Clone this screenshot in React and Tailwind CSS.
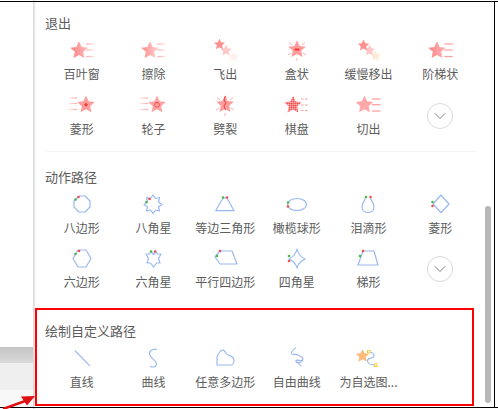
import { ChevronDown } from 'lucide-react';

const starPts = (cx, cy, r) => {
  const pts = [];
  for (let i = 0; i < 10; i++) {
    const rad = i % 2 === 0 ? r : r * 0.48;
    const a = -Math.PI / 2 + (i * Math.PI) / 5;
    pts.push(`${(cx + rad * Math.cos(a)).toFixed(2)},${(cy + rad * Math.sin(a)).toFixed(2)}`);
  }
  return pts.join(' ');
};

function Defs() {
  return (
    <svg width="0" height="0" className="absolute">
      <defs>
        <linearGradient id="fadeR">
          <stop offset="0" stopColor="#ff8282" />
          <stop offset="1" stopColor="#ffb8b8" />
        </linearGradient>
        <linearGradient id="fadeWipe">
          <stop offset="0" stopColor="#ff8888" />
          <stop offset="1" stopColor="#ffd4d4" />
        </linearGradient>
        <linearGradient id="lineR">
          <stop offset="0" stopColor="#ffa6a6" />
          <stop offset="1" stopColor="#ffecec" />
        </linearGradient>
        <linearGradient id="lineL">
          <stop offset="0" stopColor="#ffecec" />
          <stop offset="1" stopColor="#ffa6a6" />
        </linearGradient>
        <pattern id="check" width="2" height="2" patternUnits="userSpaceOnUse">
          <rect width="2" height="2" fill="#ff8080" />
          <rect width="1" height="1" fill="#f04a4a" />
          <rect x="1" y="1" width="1" height="1" fill="#ffb0b0" />
        </pattern>
      </defs>
    </svg>
  );
}

function Svg({ children }) {
  return (
    <svg width="28" height="24" viewBox="0 0 28 24" fill="none">
      {children}
    </svg>
  );
}

const Lines = ({ x, stroke, ys = [6, 12, 18.5] }) =>
  ys.map((y) => <rect key={y} x={x} y={y - 0.6} width="8.5" height="1.2" fill={stroke} />);

const Burst = () => (
  <g stroke="#ffa8a8" strokeWidth="0.9">
    <path d="M6 4.5l3 2.5M22 4.5l-3 2.5M5 17l3-2M23 17l-3-2M14 20v3" />
  </g>
);

const icons = {
  blinds: (
    <Svg>
      <polygon points={starPts(11, 12.5, 9.2)} fill="url(#fadeR)" />
      <Lines x={18.3} stroke="url(#lineR)" />
    </Svg>
  ),
  wipe: (
    <Svg>
      <polygon points={starPts(11, 12.5, 9.2)} fill="url(#fadeWipe)" />
      <Lines x={18.3} stroke="url(#lineR)" />
    </Svg>
  ),
  fly: (
    <Svg>
      <polygon points={starPts(22.5, 19, 5.5)} fill="#fff0f0" />
      <polygon points={starPts(15, 12.5, 6)} fill="#ffc8c8" />
      <polygon points={starPts(8.5, 6.5, 5.8)} fill="#ff9090" />
    </Svg>
  ),
  box: (
    <Svg>
      <Burst />
      <polygon points={starPts(14, 11.5, 9.2)} fill="#ff9c9c" />
      <rect x="11.5" y="10.5" width="5" height="2" fill="#f03a3a" />
    </Svg>
  ),
  crawl: (
    <Svg>
      <polygon points={starPts(21.5, 18, 5.5)} fill="#ffe8d6" />
      <polygon points={starPts(15.5, 12.5, 5.8)} fill="#ffc4c4" />
      <polygon points={starPts(9.5, 7.5, 6)} fill="#ff9090" />
    </Svg>
  ),
  stairs: (
    <Svg>
      <polygon points={starPts(11, 12.5, 9.2)} fill="url(#fadeR)" />
      <Lines x={18.3} stroke="#ffa0a0" />
    </Svg>
  ),
  diamond: (
    <Svg>
      <Lines x={0.5} stroke="url(#lineL)" ys={[5, 10.5, 16.5]} />
      <polygon points={starPts(18, 11.8, 9.2)} fill="#ff9c9c" />
      <polygon points="18,9.8 20,11.8 18,13.8 16,11.8" fill="#f03a3a" />
    </Svg>
  ),
  wheel: (
    <Svg>
      <Lines x={0.5} stroke="url(#lineL)" ys={[5, 10.5, 16.5]} />
      <polygon points={starPts(18, 11.8, 9.2)} fill="#ffa4a4" />
      <circle cx="18" cy="11.8" r="2.4" stroke="#f05050" strokeWidth="1" />
    </Svg>
  ),
  split: (
    <Svg>
      <Burst />
      <polygon points={starPts(14, 11.5, 9.2)} fill="#ff9c9c" />
      <path d="M14.5 3l-1.5 4 2 3-2 3 1.5 4" stroke="#f03a3a" strokeWidth="1" />
    </Svg>
  ),
  checker: (
    <Svg>
      <polygon points={starPts(10, 12, 9.2)} fill="url(#check)" />
      <path d="M18 6h7M18 12h7M18 17.5h7" stroke="#ff9a9a" strokeWidth="1.2" strokeDasharray="2.5 1.5" />
    </Svg>
  ),
  cut: (
    <Svg>
      <polygon points={starPts(10.5, 11.8, 9.2)} fill="#ffa8a8" />
      <Lines x={18} stroke="#ff9a9a" ys={[6, 11.7, 18]} />
    </Svg>
  ),
};

const Dots = ({ g, r }) => (
  <>
    <circle cx={g[0]} cy={g[1]} r="1.3" fill="#4cb84c" />
    <circle cx={r[0]} cy={r[1]} r="1.3" fill="#f05050" />
  </>
);

const blue = { stroke: '#9ab9f0', strokeWidth: 1.2, strokeLinejoin: 'round', strokeLinecap: 'round' };

const paths = {
  octagon: (
    <Svg>
      <polygon points="11,4 17,4 22,9 22,15 17,20 11,20 6,15 6,9" {...blue} />
      <Dots g={[7.5, 7.5]} r={[10.5, 5]} />
    </Svg>
  ),
  star8: (
    <Svg>
      <polygon points="14,3 16.5,6.5 20.5,5.5 19.5,10 23,12.5 19.5,15 20.5,19 16.5,18 14,21.5 11.5,18 7.5,19 8.5,15 5,12.5 8.5,10 7.5,5.5 11.5,6.5" {...blue} />
      <Dots g={[7.5, 10]} r={[10.5, 7]} />
    </Svg>
  ),
  triangle: (
    <Svg>
      <polygon points="12,6 16,6 23,18.7 4.7,18.7" {...blue} />
      <Dots g={[12, 5.5]} r={[16, 5.5]} />
    </Svg>
  ),
  ellipse: (
    <Svg>
      <ellipse cx="14" cy="12.5" rx="9.5" ry="6" {...blue} />
      <Dots g={[5, 10.5]} r={[5, 14.5]} />
    </Svg>
  ),
  tear: (
    <Svg>
      <path d="M11.5 5.5C11 9 8 11 8 15c0 3.5 2.8 5.5 6 5.5s6-2 6-5.5c0-4-3-6-3.5-9.5" {...blue} />
      <Dots g={[12, 5]} r={[16.5, 5]} />
    </Svg>
  ),
  rhombus: (
    <Svg>
      <polygon points="15,3 23,12 15,20.5 7,12" {...blue} />
      <Dots g={[6.5, 10]} r={[6.5, 14]} />
    </Svg>
  ),
  hexagon: (
    <Svg>
      <polygon points="10,4 18,4 23,12.5 18,21 10,21 5,12.5" {...blue} />
      <Dots g={[7.5, 8]} r={[11, 5]} />
    </Svg>
  ),
  star6: (
    <Svg>
      <polygon points="12,5.5 14.5,8.5 17,5.5 18.5,8 22,8 19.5,12.5 21,17 17.5,17 14.5,21 11.5,17 8,17 9.5,12.5 7,8 10.5,8" {...blue} />
      <Dots g={[12, 5.5]} r={[16, 5.5]} />
    </Svg>
  ),
  parallel: (
    <Svg>
      <polygon points="9,5 21,5 26,18 9,18 4,11" {...blue} />
      <Dots g={[6, 10]} r={[9, 5]} />
    </Svg>
  ),
  star4: (
    <Svg>
      <path d="M14 3C15 8 18 11 22 13C18 15 15 18 14 22C13 18 10 15 6 13C10 11 13 8 14 3Z" {...blue} />
      <Dots g={[6, 10]} r={[6, 15]} />
    </Svg>
  ),
  trapezoid: (
    <Svg>
      <polygon points="9,5 20,5 24,19 4,19" {...blue} />
      <Dots g={[6, 10]} r={[9, 5]} />
    </Svg>
  ),
  line: (
    <Svg>
      <path d="M7.3 5L21.6 19.7" {...blue} />
    </Svg>
  ),
  curve: (
    <Svg>
      <path d="M17.5 3.5C13 2 9.5 6 11 9.5C12.5 13 18 15 17.5 18.5C17.2 21 13 21.5 11.5 20.5" {...blue} />
    </Svg>
  ),
  polygon: (
    <Svg>
      <path d="M6 19V11C7 8 9 5 11.5 4C13.5 3.5 14 6 15.5 8C17 10 23 9 23 14.5C23 17 21.5 19 20 19Z" {...blue} />
    </Svg>
  ),
  free: (
    <Svg>
      <path d="M12.3 2C10 4 7.5 6 8.5 7.5C10 9.5 13 7.5 15 9C17 10 21 12 19.5 14C18 15.5 13 13 13 15C13 16.5 15 16 18 20" {...blue} />
      <path d="M13 15.5C15 17 19 17 19.5 14" {...blue} />
    </Svg>
  ),
  custom: (
    <Svg>
      <path d="M15 6C19 6 21 9 19.5 11C17 13 13 12 13.5 15C14 18 18 19 21 19" stroke="#9ab9f0" strokeWidth="1.1" />
      <polygon points={starPts(8.5, 10, 7)} fill="#fdbb7a" />
      <rect x="13.5" y="4.5" width="2.5" height="2.5" fill="#fff" stroke="#f2cc3d" />
      <rect x="20.5" y="18" width="2.5" height="2.5" fill="#fff" stroke="#f2cc3d" />
    </Svg>
  ),
};

const exitItems = [
  ['百叶窗', 'blinds'], ['擦除', 'wipe'], ['飞出', 'fly'], ['盒状', 'box'], ['缓慢移出', 'crawl'], ['阶梯状', 'stairs'],
  ['菱形', 'diamond'], ['轮子', 'wheel'], ['劈裂', 'split'], ['棋盘', 'checker'], ['切出', 'cut'],
];

const pathItems = [
  ['八边形', 'octagon'], ['八角星', 'star8'], ['等边三角形', 'triangle'], ['橄榄球形', 'ellipse'], ['泪滴形', 'tear'], ['菱形', 'rhombus'],
  ['六边形', 'hexagon'], ['六角星', 'star6'], ['平行四边形', 'parallel'], ['四角星', 'star4'], ['梯形', 'trapezoid'],
];

const drawItems = [
  ['直线', 'line'], ['曲线', 'curve'], ['任意多边形', 'polygon'], ['自由曲线', 'free'], ['为自选图...', 'custom'],
];

function Item({ label, icon }) {
  return (
    <div className="flex flex-col items-center">
      <div className="h-6">{icon}</div>
      <div className="mt-[3px] h-[18px] text-xs leading-[18px] text-[#5c5c5c] whitespace-nowrap">{label}</div>
    </div>
  );
}

function More() {
  return (
    <div className="flex h-[45px] items-center justify-center">
      <div className="flex h-[26px] w-[26px] items-center justify-center rounded-full border border-[#d9d9d9]">
        <ChevronDown size={20} strokeWidth={1} className="text-[#666]" />
      </div>
    </div>
  );
}

function Heading({ children, className }) {
  return <h3 className={`-ml-px h-[18px] text-[13px] leading-[18px] text-[#5c5c5c] ${className}`}>{children}</h3>;
}

export default function App() {
  return (
    <div
      className="relative flex h-[409px] w-[498px] overflow-hidden bg-white"
      style={{ fontFamily: '"Microsoft YaHei", "Noto Sans CJK SC", sans-serif' }}
    >
      <Defs />

      <div className="flex w-[33px] shrink-0 flex-col">
        <div className="h-[347px] bg-white" />
        <div className="h-[16px] bg-gradient-to-b from-[#c4c4c4] to-[#dadada]" />
        <div className="h-[27px] bg-[#efefef]" />
        <div className="h-[17px] bg-[#f8f8f8]" />
      </div>

      <div className="w-[3px] shrink-0 bg-gradient-to-r from-[#d4d4d4] to-white" />

      <div className="w-[440px] shrink-0 pl-[10px] pt-[14px]">
        <Heading>退出</Heading>
        <div className="mt-1.5 grid grid-cols-6 gap-y-2.5">
          {exitItems.map(([label, key]) => (
            <Item key={label} label={label} icon={icons[key]} />
          ))}
          <More />
        </div>

        <div className="mt-[13px] h-px bg-[#f3f3f3]" />

        <Heading className="mt-4">动作路径</Heading>
        <div className="mt-1.5 grid grid-cols-6 gap-y-[9px]">
          {pathItems.map(([label, key]) => (
            <Item key={label} label={label} icon={paths[key]} />
          ))}
          <More />
        </div>

        <Heading className="mt-[31px]">绘制自定义路径</Heading>
        <div className="mt-1.5 grid grid-cols-6">
          {drawItems.map(([label, key]) => (
            <Item key={label} label={label} icon={paths[key]} />
          ))}
        </div>
      </div>

      <div className="flex flex-1 justify-end pr-[7px] pt-[206px]">
        <div className="h-[197px] w-1.5 rounded-full bg-[#b7b7b7]" />
      </div>

      {/* screenshot frame and annotation */}
      <div className="absolute inset-x-0 top-px h-px bg-black" />
      <div className="absolute bottom-[2px] right-[3px] top-px w-px bg-black" />
      <div className="absolute inset-x-0 top-[407px] h-px bg-black" />
      <div className="absolute left-[35px] top-[308px] h-[98px] w-[439px] border-2 border-[#f00]" />
      <svg className="absolute left-0 top-[390px]" width="36" height="19" viewBox="0 0 36 19" fill="none">
        <path d="M3 19L28 10" stroke="#e01010" strokeWidth="2.5" />
        <path d="M35 6L21 6.5L27 15.5Z" fill="#e01010" />
      </svg>
    </div>
  );
}
